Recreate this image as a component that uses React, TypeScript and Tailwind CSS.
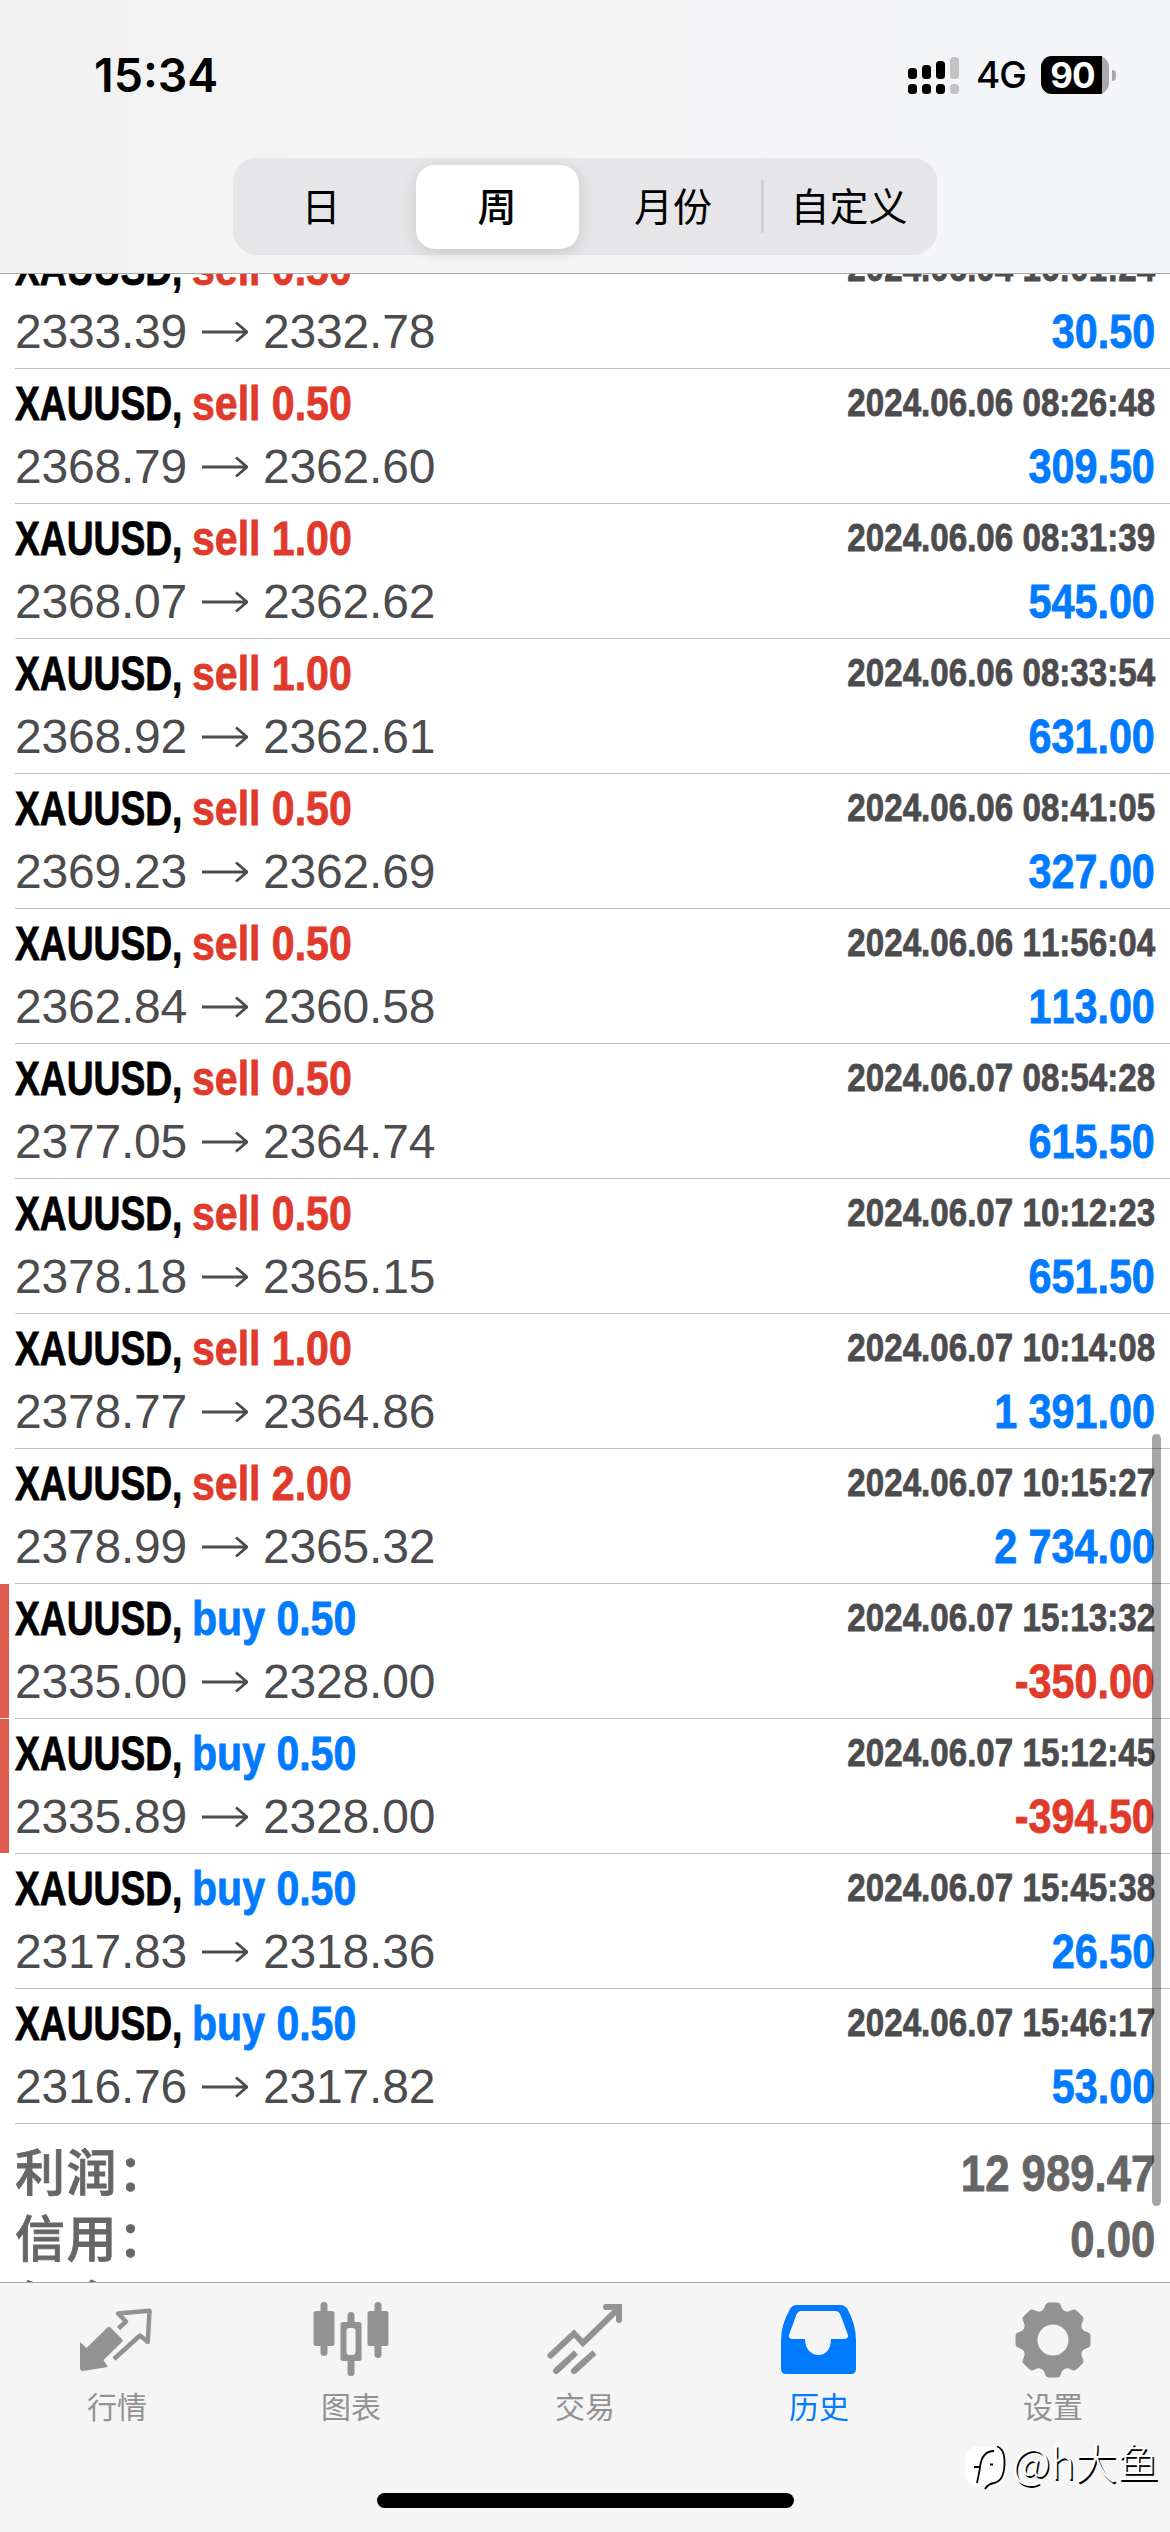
type Side = 'sell' | 'buy'

interface Deal {
  side: Side
  lot: string
  open: string
  close: string
  time: string
  profit: string
  stopped?: boolean
}

const DEALS: Deal[] = [
  { side: 'sell', lot: '0.50', open: '2333.39', close: '2332.78', time: '2024.06.04 16:01:24', profit: '30.50' },
  { side: 'sell', lot: '0.50', open: '2368.79', close: '2362.60', time: '2024.06.06 08:26:48', profit: '309.50' },
  { side: 'sell', lot: '1.00', open: '2368.07', close: '2362.62', time: '2024.06.06 08:31:39', profit: '545.00' },
  { side: 'sell', lot: '1.00', open: '2368.92', close: '2362.61', time: '2024.06.06 08:33:54', profit: '631.00' },
  { side: 'sell', lot: '0.50', open: '2369.23', close: '2362.69', time: '2024.06.06 08:41:05', profit: '327.00' },
  { side: 'sell', lot: '0.50', open: '2362.84', close: '2360.58', time: '2024.06.06 11:56:04', profit: '113.00' },
  { side: 'sell', lot: '0.50', open: '2377.05', close: '2364.74', time: '2024.06.07 08:54:28', profit: '615.50' },
  { side: 'sell', lot: '0.50', open: '2378.18', close: '2365.15', time: '2024.06.07 10:12:23', profit: '651.50' },
  { side: 'sell', lot: '1.00', open: '2378.77', close: '2364.86', time: '2024.06.07 10:14:08', profit: '1 391.00' },
  { side: 'sell', lot: '2.00', open: '2378.99', close: '2365.32', time: '2024.06.07 10:15:27', profit: '2 734.00' },
  { side: 'buy', lot: '0.50', open: '2335.00', close: '2328.00', time: '2024.06.07 15:13:32', profit: '-350.00', stopped: true },
  { side: 'buy', lot: '0.50', open: '2335.89', close: '2328.00', time: '2024.06.07 15:12:45', profit: '-394.50', stopped: true },
  { side: 'buy', lot: '0.50', open: '2317.83', close: '2318.36', time: '2024.06.07 15:45:38', profit: '26.50' },
  { side: 'buy', lot: '0.50', open: '2316.76', close: '2317.82', time: '2024.06.07 15:46:17', profit: '53.00' },
]

const RANGES = ['日', '周', '月份', '自定义']

function StatusBar() {
  return (
    <div className="flex h-[158px] items-start justify-between pl-[94px] pr-[54px] pt-[50px]">
      <span className="font-['Inter'] text-[46.5px] leading-[50px] font-semibold">15:34</span>
      <div className="flex h-[50px] items-center">
        <svg className="mr-[16px] h-[38px] w-[52px]" viewBox="0 0 52 38">
          <rect x="0" y="12" width="9" height="11" rx="3.5" />
          <rect x="14" y="9" width="9" height="14" rx="3.5" />
          <rect x="28" y="5" width="9" height="18" rx="3.5" />
          <rect x="42" y="1" width="9" height="22" rx="3.5" fill="#c3c3c5" />
          <rect x="0" y="28" width="9" height="10" rx="3.5" />
          <rect x="14" y="28" width="9" height="10" rx="3.5" />
          <rect x="28" y="28" width="9" height="10" rx="3.5" />
          <rect x="42" y="28" width="9" height="10" rx="3.5" fill="#c3c3c5" />
        </svg>
        <span className="w-[65px] font-['Inter'] text-[37px] leading-[50px] font-medium tracking-[-1px]">4G</span>
        <div className="flex h-[38px] w-[68px] items-center rounded-[11px] bg-[#a9a9ab]">
          <span className="h-[38px] w-[61px] rounded-l-[11px] bg-black pl-[2px] text-center font-['Inter'] text-[35px] leading-[38px] font-bold tracking-[-1px] text-white">
            90
          </span>
        </div>
        <div className="ml-[3px] h-[11px] w-[4px] rounded-r-full bg-[#a9a9ab]" />
      </div>
    </div>
  )
}

function RangePicker() {
  return (
    <div className="relative mx-auto grid h-[97px] w-[704px] grid-cols-4 rounded-[24px] bg-[#e6e5e7] text-[39px]">
      {RANGES.map((label, i) => (
        <div key={label} className="flex items-center justify-center p-[6px]">
          <span
            className={
              i === 1
                ? 'flex h-[84px] w-[163px] items-center justify-center rounded-[19px] bg-white pt-[3px] font-medium shadow-[0_4px_16px_rgba(0,0,0,0.13)]'
                : 'pt-[3px]'
            }
          >
            {label}
          </span>
        </div>
      ))}
      <div className="absolute top-[22px] left-[528px] h-[53px] w-[3px] rounded bg-[#d0cfd2]" />
    </div>
  )
}

function Arrow() {
  return (
    <svg className="mx-[15px] h-[22px] w-[46px]" viewBox="0 0 46 22" fill="none" stroke="#4c4c4e" strokeWidth="2.8">
      <path d="M0 11H45M34 1.5L45 11L34 20.5" />
    </svg>
  )
}

function DealRow({ deal }: { deal: Deal }) {
  const loss = deal.profit.startsWith('-')
  return (
    <div className="flex h-[135px] [font-kerning:none]">
      <div className={`h-[134px] w-[9px] shrink-0 ${deal.stopped ? 'bg-[#e05c50]' : ''}`} />
      <div className="ml-[6px] flex grow flex-col border-b border-[#bfbfc1] pr-[15px]">
        <div className="flex h-[68px] justify-between font-bold [-webkit-text-stroke:0.8px]">
          <div className="flex text-[48px] leading-[70px] whitespace-nowrap">
            <span className="w-[177px] origin-left scale-x-[0.775]">XAUUSD,</span>
            <span
              className={`origin-left scale-x-[0.855] ${deal.side === 'sell' ? 'text-[#df3a2b]' : 'text-[#007aff]'}`}
            >
              {deal.side} {deal.lot}
            </span>
          </div>
          <span className="origin-right scale-x-[0.85] text-[39px] leading-[68px] text-[#4c4c4e]">{deal.time}</span>
        </div>
        <div className="flex h-[60px] justify-between text-[48px] leading-[60px]">
          <div className="flex items-center tracking-[-0.2px] text-[#4c4c4e]">
            <span>{deal.open}</span>
            <Arrow />
            <span>{deal.close}</span>
          </div>
          <span
            className={`origin-right scale-x-[0.86] font-bold [-webkit-text-stroke:0.8px] ${loss ? 'text-[#df3a2b]' : 'text-[#007aff]'}`}
          >
            {deal.profit}
          </span>
        </div>
      </div>
    </div>
  )
}

function SummaryRow({ label, value }: { label: string; value: string }) {
  return (
    <div className="flex h-[66px] items-center justify-between pr-[15px] pl-[15px] text-[50px] leading-[66px] text-[#666] [-webkit-text-stroke:0.8px]">
      <span className="font-medium tracking-[1.5px]">{label}</span>
      <span className="origin-right scale-x-[0.875] font-bold [font-kerning:none]">{value}</span>
    </div>
  )
}

function QuotesIcon() {
  return (
    <svg className="h-[76px] w-[76px]" viewBox="0 0 76 76">
      <path
        d="M28.5 25.5Q30 24 31.5 25.5L43 37Q44.5 38.5 43 40L24.5 58L29 65L4 69Q1 69 1 66V40L7.5 46Z"
        fill="#929292"
      />
      <path
        d="M39.5 26.5L47 19.5L39 11.5L70.5 8.8L68.8 40L61 33.5L35 57"
        fill="none"
        stroke="#929292"
        strokeWidth="4.5"
        strokeLinejoin="round"
      />
    </svg>
  )
}

function ChartIcon() {
  return (
    <svg className="h-[76px] w-[76px]" viewBox="0 0 76 76" fill="#929292">
      <rect x="7.5" y="0" width="7" height="54" rx="3.5" />
      <rect x="0.5" y="9" width="21" height="35" rx="2.5" />
      <rect x="61.5" y="0" width="7" height="56" rx="3.5" />
      <rect x="54.5" y="9" width="21" height="35" rx="2.5" />
      <rect x="34.5" y="10" width="7" height="64" rx="3.5" />
      <rect x="27.5" y="20" width="21" height="39" rx="2.5" />
      <rect x="33.5" y="26" width="9" height="27" rx="3" fill="#f5f5f5" />
    </svg>
  )
}

function TradeIcon() {
  return (
    <svg
      className="h-[76px] w-[76px]"
      viewBox="0 0 76 76"
      fill="none"
      stroke="#929292"
      strokeWidth="6"
      strokeLinecap="round"
    >
      <path d="M3.5 53.5L27 31.5L36 41L72 6M59 5H72V18" />
      <path d="M9 69L29 50.5M27 69L47.5 50.5" strokeLinecap="butt" />
      <path d="M9 69L20 59M27 69L38 59" />
    </svg>
  )
}

function HistoryIcon() {
  return (
    <svg className="h-[76px] w-[76px]" viewBox="0 0 76 76">
      <path
        fill="#007aff"
        fillRule="evenodd"
        d="M16 3H59Q64 3 66.5 7Q75 23 75 38V67Q75 72 70 72H5Q0 72 0 67V38Q0 23 9 7Q11 3 16 3ZM20 9Q17 9 15.5 12.5L8 33Q7.5 37 11 37H24C24 47 30 53 37.5 53S50 47 50 37H63Q67.5 37 67 33L59.5 13Q58 9 54 9Z"
      />
    </svg>
  )
}

function SettingsIcon() {
  return (
    <svg className="h-[76px] w-[76px]" viewBox="0 0 76 76">
      <g fill="#929292">
        <circle cx="38" cy="38" r="31" />
        {[0, 45, 90, 135, 180, 225, 270, 315].map((angle) => (
          <path
            key={angle}
            transform={`rotate(${angle} 38 38)`}
            d="M26 9.5Q29 8 30 4Q31 0.5 34 0.5H42Q45 0.5 46 4Q47 8 50 9.5V18H26Z"
          />
        ))}
      </g>
      <circle cx="38" cy="38" r="15.5" fill="#f5f5f5" />
    </svg>
  )
}

const TABS = [
  { label: '行情', Icon: QuotesIcon },
  { label: '图表', Icon: ChartIcon },
  { label: '交易', Icon: TradeIcon },
  { label: '历史', Icon: HistoryIcon, active: true },
  { label: '设置', Icon: SettingsIcon },
]

function Watermark() {
  return (
    <div className="absolute top-[2437px] left-[965px] flex items-center font-['Noto_Sans_CJK_SC'] text-[42px] leading-[50px] font-light whitespace-nowrap text-white">
      <svg className="mr-[3px] h-[54px] w-[44px] overflow-visible" viewBox="0 0 44 54">
        <rect x="0" y="9" width="40" height="40" rx="13" fill="#fff" />
        <path
          d="M12 46L15 31M9 30H15Q17 14 29 14M25 27.5H28M32 9.5Q40 12 39.5 27Q39 44 29 46Q23 47 20 52"
          fill="none"
          stroke="#000"
          strokeWidth="1.8"
        />
      </svg>
      <span className="-mt-[6px] [text-shadow:1.5px_1.5px_0_#000]">@h大鱼</span>
    </div>
  )
}

export default function App() {
  return (
    <div className="relative flex h-[2532px] w-[1170px] flex-col overflow-hidden bg-white font-['Liberation_Sans','Noto_Sans_CJK_SC',sans-serif] text-black">
      <header className="h-[274px] shrink-0 border-b border-[#a9a9ab] bg-linear-to-r from-[#f1f1f1] via-[#f5f5f5] via-30% to-[#f4f5f8]">
        <StatusBar />
        <RangePicker />
      </header>

      <main className="h-[2008px] shrink-0 overflow-hidden">
        <div className="-mt-[40px]">
          {DEALS.map((deal) => (
            <DealRow key={deal.time} deal={deal} />
          ))}
        </div>
        <div className="pt-[17px]">
          <SummaryRow label="利润：" value="12 989.47" />
          <SummaryRow label="信用：" value="0.00" />
          <SummaryRow label="佣金：" value="" />
        </div>
      </main>

      <nav className="grid grow grid-cols-5 border-t border-[#a9a9ab] bg-[#f5f5f5]">
        {TABS.map(({ label, Icon, active }) => (
          <div
            key={label}
            className={`flex flex-col items-center pt-[19px] text-[30px] leading-[44px] ${active ? 'text-[#007aff]' : 'text-[#929292]'}`}
          >
            <Icon />
            <span className="mt-[8px]">{label}</span>
          </div>
        ))}
      </nav>

      <div className="absolute top-[1434px] left-[1152px] h-[772px] w-[9px] rounded-full bg-black/35" />
      <div className="absolute top-[2493px] left-[377px] h-[15px] w-[417px] rounded-full bg-black" />
      <Watermark />
    </div>
  )
}
